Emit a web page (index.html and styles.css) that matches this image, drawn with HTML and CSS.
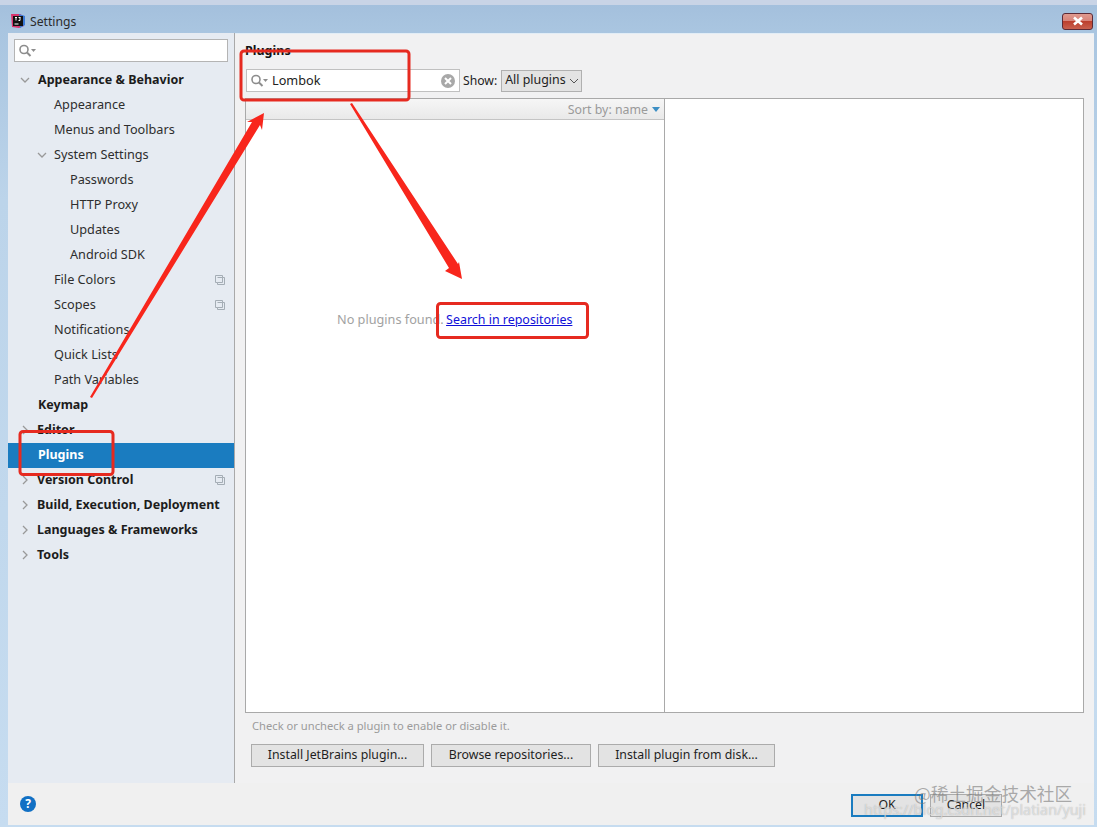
FILE: index.html
```html
<!DOCTYPE html>
<html lang="en">
<head>
<meta charset="utf-8">
<title>Settings</title>
<link rel="stylesheet" href="styles.css">
</head>
<body>
<div class="window">
  <header class="titlebar">
    <svg class="app-icon" width="16" height="16" viewBox="0 0 16 16"><path d="M1 1h9l5 3-1 9-5 2-7-1z" fill="#d9346e"/><path d="M9 1l6 2v9l-5 3z" fill="#3b7bd8"/><rect x="3" y="3" width="10" height="10" fill="#111"/><rect x="4.500" y="10.500" width="4" height="1" fill="#fff"/><path d="M5 4.500h2M6 4.500v3M8.500 4.500h2M10 4.500v3h-1.500" stroke="#fff" fill="none"/></svg>
    <span class="title">Settings</span>
    <button class="close" aria-label="Close"><svg width="14" height="10" viewBox="0 0 14 10"><path d="M3 1.500l8 7M11 1.500l-8 7" stroke="#fff" stroke-width="2.600"/></svg></button>
  </header>
  <div class="frame">
    <div class="panes">
      <aside class="sidebar">
        <div class="side-search">
          <svg class="mag" width="18" height="14" viewBox="0 0 18 14"><circle cx="6" cy="5.500" r="4" fill="none" stroke="#8d8d8d" stroke-width="1.600"/><path d="M9 8.500l3.500 3.500" stroke="#8d8d8d" stroke-width="2"/><path d="M13 5h5l-2.500 3z" fill="#8d8d8d"/></svg>
        </div>
        <ul class="tree">
          <li class="row b lv0"><svg class="chev" width="10" height="10" viewBox="0 0 10 10"><path d="M1 3l4 4 4-4" fill="none" stroke="#999" stroke-width="1.300"/></svg>Appearance &amp; Behavior</li>
          <li class="row lv1">Appearance</li>
          <li class="row lv1">Menus and Toolbars</li>
          <li class="row lv1 has"><svg class="chev" width="10" height="10" viewBox="0 0 10 10"><path d="M1 3l4 4 4-4" fill="none" stroke="#999" stroke-width="1.300"/></svg>System Settings</li>
          <li class="row lv2">Passwords</li>
          <li class="row lv2">HTTP Proxy</li>
          <li class="row lv2">Updates</li>
          <li class="row lv2">Android SDK</li>
          <li class="row lv1">File Colors<svg class="copy" width="10" height="10" viewBox="0 0 10 10"><path d="M.5.500h7v2h2v7h-7v-2h-2z M2.500 2.500h5v5h-5" fill="none" stroke="#a4adb5"/></svg></li>
          <li class="row lv1">Scopes<svg class="copy" width="10" height="10" viewBox="0 0 10 10"><path d="M.5.500h7v2h2v7h-7v-2h-2z M2.500 2.500h5v5h-5" fill="none" stroke="#a4adb5"/></svg></li>
          <li class="row lv1">Notifications</li>
          <li class="row lv1">Quick Lists</li>
          <li class="row lv1">Path Variables</li>
          <li class="row b lv0">Keymap</li>
          <li class="row b lv0 par"><svg class="chev" width="10" height="10" viewBox="0 0 10 10"><path d="M3 1l4 4-4 4" fill="none" stroke="#999" stroke-width="1.300"/></svg>Editor</li>
          <li class="row b lv0 sel">Plugins</li>
          <li class="row b lv0 par"><svg class="chev" width="10" height="10" viewBox="0 0 10 10"><path d="M3 1l4 4-4 4" fill="none" stroke="#999" stroke-width="1.300"/></svg>Version Control<svg class="copy" width="10" height="10" viewBox="0 0 10 10"><path d="M.5.500h7v2h2v7h-7v-2h-2z M2.500 2.500h5v5h-5" fill="none" stroke="#a4adb5"/></svg></li>
          <li class="row b lv0 par"><svg class="chev" width="10" height="10" viewBox="0 0 10 10"><path d="M3 1l4 4-4 4" fill="none" stroke="#999" stroke-width="1.300"/></svg>Build, Execution, Deployment</li>
          <li class="row b lv0 par"><svg class="chev" width="10" height="10" viewBox="0 0 10 10"><path d="M3 1l4 4-4 4" fill="none" stroke="#999" stroke-width="1.300"/></svg>Languages &amp; Frameworks</li>
          <li class="row b lv0 par"><svg class="chev" width="10" height="10" viewBox="0 0 10 10"><path d="M3 1l4 4-4 4" fill="none" stroke="#999" stroke-width="1.300"/></svg>Tools</li>
        </ul>
      </aside>
      <main class="main">
        <h1 class="heading">Plugins</h1>
        <div class="toolbar">
          <div class="search">
            <svg class="mag" width="18" height="14" viewBox="0 0 18 14"><circle cx="6" cy="5.500" r="4" fill="none" stroke="#8d8d8d" stroke-width="1.600"/><path d="M9 8.500l3.500 3.500" stroke="#8d8d8d" stroke-width="2"/><path d="M13 5h5l-2.500 3z" fill="#8d8d8d"/></svg>
            <span class="query">Lombok</span>
            <svg class="clear" width="14" height="14" viewBox="0 0 14 14"><circle cx="7" cy="7" r="7" fill="#a8a8a8"/><path d="M4 4l6 6M10 4l-6 6" stroke="#fff" stroke-width="2"/></svg>
          </div>
          <span class="show">Show:</span>
          <div class="combo">All plugins<svg width="10" height="6" viewBox="0 0 10 6"><path d="M1 1l4 4 4-4" fill="none" stroke="#555"/></svg></div>
        </div>
        <div class="table">
          <section class="list">
            <div class="sort">Sort by: name<svg width="8" height="5" viewBox="0 0 8 5"><path d="M0 0h8L4 5z" fill="#3d8fc4"/></svg></div>
            <div class="empty"><span class="none">No plugins found.</span> <a class="link" href="#">Search in repositories</a></div>
          </section>
          <section class="detail"></section>
        </div>
        <p class="hint">Check or uncheck a plugin to enable or disable it.</p>
        <div class="actions">
          <button class="btn w1">Install JetBrains plugin...</button>
          <button class="btn w2">Browse repositories...</button>
          <button class="btn w3">Install plugin from disk...</button>
        </div>
      </main>
    </div>
    <footer class="footer">
      <span class="help">?</span>
      <div class="dialog">
        <button class="btn ok">OK</button>
        <button class="btn cancel">Cancel</button>
      </div>
    </footer>
  </div>
</div>
<svg class="marks" width="1097" height="827" viewBox="0 0 1097 827" aria-hidden="true">
  <rect x="241" y="51" width="168" height="49" rx="3" class="box"/>
  <rect x="437.500" y="303.500" width="150" height="34" rx="3" class="box"/>
  <rect x="20" y="431.500" width="93" height="43" rx="3" class="box"/>
  <polygon class="arrow" points="90,397 252,122 247,122 264,113 262,130 260,125 92,398"/>
  <polygon class="arrow" points="350,104 449,268 445,271 462,279 459,262 458,264 352,103"/>
</svg>
<div class="wm wm1">@稀土掘金技术社区</div>
<div class="wm wm2">https://blog.csdn.net/platian/yuji</div>
</body>
</html>
```
FILE: styles.css
```css
* { box-sizing: border-box; }
html, body { margin: 0; padding: 0; }
body {
  position: relative;
  width: 1097px;
  height: 827px;
  overflow: hidden;
  font-family: "Noto Sans", "Open Sans", sans-serif;
  font-size: 12.700px;
  color: #222;
  background: #fff;
}
.window {
  height: 827px;
  display: flex;
  flex-direction: column;
  padding: 5px 3px 2px 8px;
  background: linear-gradient(#a3bfdc 0, #a9c5e0 30px, #bcd4ea 200px, #c6dcf0 100%);
  box-shadow: inset 0 5px 0 #c9d4e6;
}
.titlebar {
  height: 28px;
  display: flex;
  align-items: center;
  margin-left: 2px;
  padding: 4px 1px 0 0;
  flex: none;
}
.app-icon { margin-right: 4px; }
.title { font-size: 12.200px; color: #2b2b2b; }
.close {
  margin-left: auto;
  margin-right: 0;
  width: 31px;
  height: 17px;
  padding: 0;
  display: flex;
  align-items: center;
  justify-content: center;
  border: 1px solid #5c2a36;
  border-radius: 3px;
  background: linear-gradient(#e09a8f 0, #d8847a 45%, #bc3f2e 50%, #c9604e 100%);
}
.frame {
  flex: 1;
  display: flex;
  flex-direction: column;
  background: #f1f1f2;
  min-height: 0;
  box-shadow: inset 0 1px 0 #e2edf6;
}
.panes { flex: 1; display: flex; min-height: 0; }
.sidebar {
  width: 227px;
  flex: none;
  background: #e6ebf2;
  border-right: 1px solid #a9a9a9;
  padding-top: 6px;
}
.side-search {
  margin: 0 6px;
  height: 23px;
  background: #fff;
  border: 1px solid #b4b4b4;
  display: flex;
  align-items: center;
  padding-left: 3px;
}
.mag { flex: none; }
.tree { list-style: none; margin: 6px 0 0; padding: 0; }
.row {
  position: relative;
  height: 25px;
  line-height: 22px;
  white-space: nowrap;
  color: #2e2e2e;
}
.chev { position: absolute; top: 7px; }
.lv0 { padding-left: 30px; }
.lv0 .chev { left: 12px; }
.par { padding-left: 29px; }
.lv1 { padding-left: 46px; }
.lv1 .chev { left: 29px; }
.lv2 { padding-left: 62px; }
.b { font-size: 12.500px; line-height: 24px; font-weight: 700; color: #1c1c1c; }
.sel { background: #1a7cc0; color: #fff; }
.copy { position: absolute; left: 207px; top: 7px; }
.main {
  flex: 1;
  min-width: 0;
  display: flex;
  flex-direction: column;
  padding: 0 10px 0 10px;
}
.heading {
  margin: 9px 0 0;
  font-size: 12.500px;
  line-height: 18px;
  font-weight: 700;
  color: #111;
}
.toolbar {
  display: flex;
  align-items: center;
  height: 23px;
  margin-top: 9px;
  margin-left: 1px;
}
.search {
  width: 214px;
  height: 23px;
  display: flex;
  align-items: center;
  background: #fff;
  border: 1px solid #c0c0c0;
  padding: 0 4px 0 3px;
}
.query { margin-left: 4px; padding-bottom: 1px; color: #222; }
.clear { margin-left: auto; }
.show { margin-left: 3px; padding-bottom: 1px; font-size: 12.200px; color: #222; }
.combo {
  margin-left: 4px;
  width: 81px;
  height: 22px;
  display: flex;
  align-items: center;
  gap: 3px;
  padding: 0 0 2px 3px;
  font-size: 12.400px;
  white-space: nowrap;
  background: #e3e3e3;
  border: 1px solid #b0b0b0;
  color: #222;
}
.combo svg { margin-top: 2px; }
.table {
  display: flex;
  margin-top: 6px;
  flex: 0 0 615px;
  background: #fff;
  border: 1px solid #a9a9a9;
}
.list {
  width: 419px;
  flex: none;
  display: flex;
  flex-direction: column;
  border-right: 1px solid #a9a9a9;
}
.sort {
  height: 21px;
  flex: none;
  display: flex;
  align-items: center;
  justify-content: flex-end;
  gap: 4px;
  padding-right: 4px;
  font-size: 12.350px;
  color: #9a9a9a;
  border-bottom: 1px solid #c4c4c4;
  background: linear-gradient(#f6f6f6, #e9e9e9);
}
.empty {
  flex: 1;
  padding: 189px 0 0 91px;
  line-height: 20px;
  white-space: nowrap;
}
.none { color: #a2a2a2; }
.link { margin-left: -1px; font-size: 12.450px; color: #1010d8; text-decoration: underline; }
.detail { flex: 1; }
.hint {
  margin: 4px 0 0 7px;
  font-size: 11.200px;
  line-height: 17px;
  color: #9b9b9b;
}
.actions { display: flex; gap: 7px; margin-top: 10px; margin-left: 6px; }
.btn {
  font-family: inherit;
  font-size: 12.300px;
  height: 23px;
  padding: 0 0 3px;
  color: #1e1e1e;
  background: #e3e3e3;
  border: 1px solid #ababab;
}
.w1 { width: 173px; }
.w2 { width: 160px; }
.w3 { width: 177px; }
.footer {
  height: 42px;
  flex: none;
  display: flex;
  align-items: flex-start;
  padding: 11px 0 0 12px;
  background: #f0f0f0;
}
.help {
  width: 16px;
  height: 16px;
  margin-top: 2px;
  border-radius: 50%;
  background: #1170c4;
  color: #fff;
  font-size: 12px;
  font-weight: 700;
  line-height: 16px;
  text-align: center;
}
.dialog { margin-left: auto; margin-right: 92px; display: flex; gap: 7px; }
.ok { width: 72px; border: 2px solid #1a7cc0; }
.cancel { width: 72px; }
.marks { position: absolute; left: 0; top: 0; pointer-events: none; }
.box { fill: none; stroke: #e62a20; stroke-width: 3; }
.arrow { fill: #f8261c; }
.wm {
  position: absolute;
  white-space: nowrap;
  pointer-events: none;
  color: rgba(120, 120, 120, .6);
}
.wm1 {
  left: 914px;
  top: 780px;
  font-family: "Noto Sans CJK SC", sans-serif;
  font-size: 17.700px;
  line-height: 26px;
}
.wm2 {
  left: 864px;
  top: 800px;
  font-size: 14.400px;
  line-height: 20px;
  color: rgba(255, 255, 255, .55);
  text-shadow: 0 0 1px rgba(120,120,120,.6);
}
```
